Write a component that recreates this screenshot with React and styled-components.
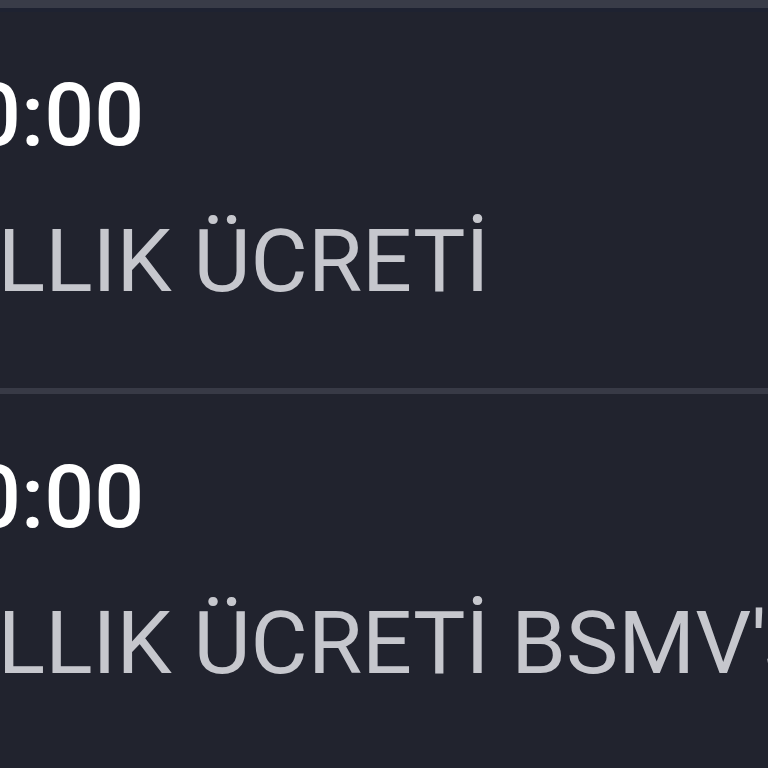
import styled, { createGlobalStyle } from 'styled-components'

const GlobalStyle = createGlobalStyle`
  html, body {
    margin: 0;
    padding: 0;
    background: #21232e;
    overflow: hidden;
  }
  body {
    font-family: Roboto, "Noto Sans", "Liberation Sans", sans-serif;
  }
`

const Page = styled.div`
  width: 768px;
  height: 768px;
  overflow: hidden;
  background: #21232e;
`

const TopBar = styled.div`
  height: 8px;
  background: #393c48;
  border-bottom: 4px solid #1e2231;
`

const List = styled.ul`
  list-style: none;
  margin: 0 0 0 -79px;
  padding: 0;
`

const Row = styled.li`
  display: flex;
  flex-direction: column;
  gap: 58px;
  padding: 59px 0 83px;
  border-bottom: 6px solid #383a46;
`

const Amount = styled.div`
  font-size: 88px;
  line-height: 88px;
  font-weight: 500;
  color: #ffffff;
  white-space: nowrap;
`

const Label = styled.div`
  font-size: 88px;
  line-height: 88px;
  font-weight: 400;
  color: #c6c7cd;
  white-space: nowrap;
`

const items = [
  { amount: '00:00', label: 'YILLIK ÜCRETİ' },
  { amount: '00:00', label: "YILLIK ÜCRETİ BSMV'si" }
]

export default function App () {
  return (
    <Page>
      <GlobalStyle />
      <TopBar />
      <List>
        {items.map((item, i) => (
          <Row key={i}>
            <Amount>{item.amount}</Amount>
            <Label>{item.label}</Label>
          </Row>
        ))}
      </List>
    </Page>
  )
}
